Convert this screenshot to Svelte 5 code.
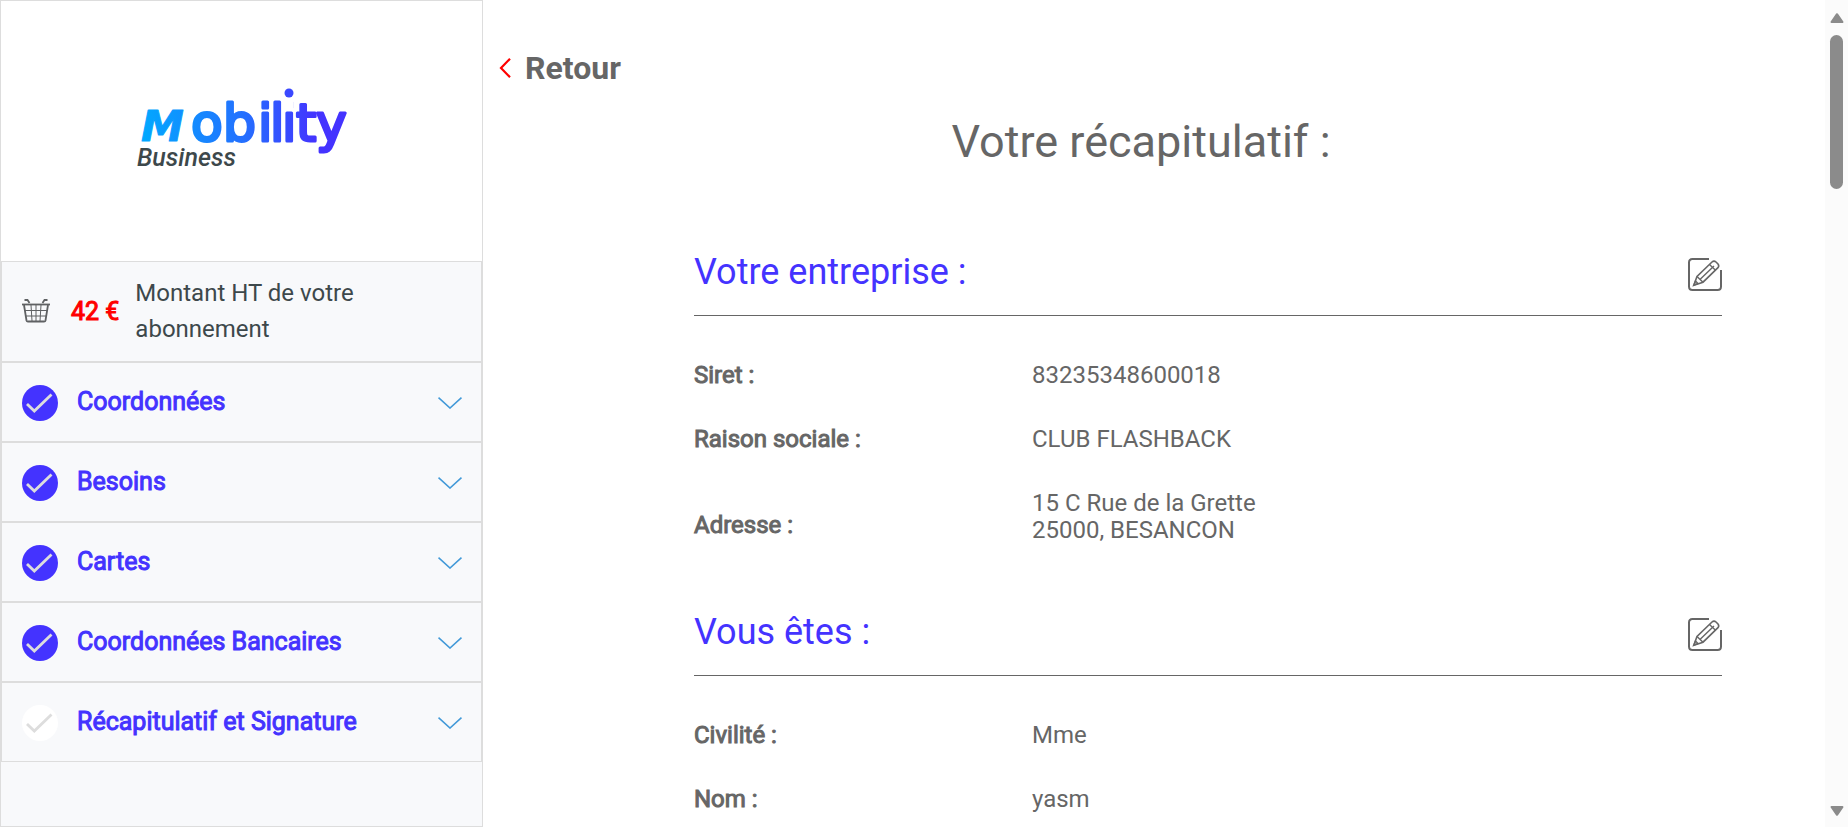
<script>
  const steps = [
    { label: 'Coordonnées', done: true },
    { label: 'Besoins', done: true },
    { label: 'Cartes', done: true },
    { label: 'Coordonnées Bancaires', done: true },
    { label: 'Récapitulatif et Signature', done: false }
  ];

  const sections = [
    {
      title: 'Votre entreprise :',
      rows: [
        { label: 'Siret :', lines: ['83235348600018'] },
        { label: 'Raison sociale :', lines: ['CLUB FLASHBACK'] },
        { label: 'Adresse :', lines: ['15 C Rue de la Grette', '25000, BESANCON'] }
      ]
    },
    {
      title: 'Vous êtes :',
      rows: [
        { label: 'Civilité :', lines: ['Mme'] },
        { label: 'Nom :', lines: ['yasm'] }
      ]
    }
  ];
</script>

<div class="page">
  <aside>
    <div class="brand">
      <svg width="216" height="90" viewBox="0 0 216 90" role="img" aria-label="Mobility Business">
        <defs>
          <linearGradient id="brand" gradientUnits="userSpaceOnUse" x1="4" y1="0" x2="214" y2="0">
            <stop offset="0" stop-color="#00aaff" />
            <stop offset="0.5" stop-color="#2470ff" />
            <stop offset="0.85" stop-color="#4433ff" />
          </linearGradient>
        </defs>
        <text class="word" y="55" fill="url(#brand)" stroke="url(#brand)" x="7 57 89 124 136 148 162 182"><tspan class="slant">M</tspan>obility</text>
        <rect x="150" y="11" width="9" height="13" fill="#fff" />
        <circle cx="155" cy="7" r="4.5" fill="#3a48ff" />
        <text class="sub" x="3" y="80">Business</text>
      </svg>
    </div>

    <div class="amount">
      <svg class="basket" width="28" height="24" viewBox="0 0 28 24" fill="none" stroke="#5f6163" aria-hidden="true">
        <path d="M0 5.5H28" stroke-width="1.8" />
        <path d="M2.5 1H5.5L7.5 4M25.5 1H22.5L20.5 4" stroke-width="1.8" />
        <path d="M2 6L4.500 21.500Q4.700 22.500 6 22.500H22Q23.300 22.500 23.500 21.500L26 6" stroke-width="1.8" />
        <path d="M3 11.500H25M4 17H24M9 6L10 22M14 6V22M19 6L18 22" />
      </svg>
      <strong class="price">42 €</strong>
      <span class="caption">Montant HT de votre abonnement</span>
    </div>

    <nav aria-label="Étapes">
      {#each steps as step}
        <button class="step" type="button">
          <svg width="36" height="36" viewBox="0 0 36 36" aria-hidden="true">
            <circle cx="18" cy="18" r="18" fill={step.done ? '#4433ff' : '#ffffff'} />
            <path d="M5 19L12.300 26L29.500 9.500" fill="none" stroke="#dddddd" stroke-width="2.8" />
          </svg>
          <span>{step.label}</span>
          <svg width="24" height="12" viewBox="0 0 24 12" aria-hidden="true">
            <path d="M0.500 0.700L12 11L23.500 0.700" fill="none" stroke="#4299d8" stroke-width="1.6" />
          </svg>
        </button>
      {/each}
    </nav>
  </aside>

  <main>
    <a class="back" href="#retour">
      <svg width="12" height="20" viewBox="0 0 12 20" aria-hidden="true">
        <path d="M11 0.800L2 10L11 19.200" fill="none" stroke="#ff0000" stroke-width="2.2" />
      </svg>
      Retour
    </a>

    <div class="content">
      <h1>Votre récapitulatif :</h1>
      {#each sections as section}
        <section>
          <header>
            <h2>{section.title}</h2>
            <button class="edit" type="button" aria-label="Modifier">
              <svg width="34" height="34" viewBox="0 0 34 34" fill="none" stroke="#666666" stroke-width="2">
                <path d="M21 1H4.500Q1 1 1 4.500V28.500Q1 32 4.500 32H29.500Q33 32 33 28.500V12" />
                <path d="M5.800 27.300L9 18.500L24 4Q26 2.200 28 4L30 6Q31.500 8 30 9.700L15 24.200Z" stroke-width="1.6" />
                <path d="M9 18.500L15 24.200M12.200 21.200L26 8M21.500 6.500L27.500 12.200M5.800 27.300L7.500 23L10 25.500Z" stroke-width="1.4" />
              </svg>
            </button>
          </header>
          <dl>
            {#each section.rows as row}
              <div class="row" class:tall={row.lines.length > 1}>
                <dt>{row.label}</dt>
                <dd>
                  {#each row.lines as line}<div>{line}</div>{/each}
                </dd>
              </div>
            {/each}
          </dl>
        </section>
      {/each}
    </div>
  </main>

  <div class="scrollbar" aria-hidden="true">
    <svg width="16" height="12" viewBox="0 0 16 12"><path d="M8 2.200L13.500 10H2.500Z" fill="#8b8b8b" stroke="#8b8b8b" stroke-width="2" stroke-linejoin="round" /></svg>
    <div class="track"><div class="thumb"></div></div>
    <svg width="16" height="12" viewBox="0 0 16 12"><path d="M8 9.800L13.500 2H2.500Z" fill="#8b8b8b" stroke="#8b8b8b" stroke-width="2" stroke-linejoin="round" /></svg>
  </div>
</div>

<style>
  :global(body) {
    margin: 0;
    background: #fff;
  }
  .page {
    display: flex;
    height: 100vh;
    overflow: hidden;
    font-family: Roboto, sans-serif;
    font-size: 24px;
    line-height: 27px;
    color: #666;
  }
  aside {
    box-sizing: border-box;
    flex: 0 0 483px;
    border: 1px solid #ddd;
    background: #f8f9fb;
    overflow: hidden;
  }
  .brand {
    display: flex;
    justify-content: center;
    padding: 85px 0;
    background: #fff;
  }
  .brand svg {
    overflow: visible;
  }
  .word {
    font-family: "DejaVu Sans", sans-serif;
    font-size: 52px;
    stroke-width: 3px;
    stroke-linejoin: round;
  }
  .slant {
    font-style: italic;
    font-size: 43px;
    font-weight: 700;
    stroke-width: 1px;
  }
  .sub {
    font-family: Roboto, sans-serif;
    font-size: 25px;
    font-style: italic;
    font-weight: 500;
    fill: #3d484b;
  }
  .amount {
    display: flex;
    align-items: center;
    padding: 13px 20px 14px;
    border: 1px solid #ddd;
    color: #3d484b;
  }
  .price {
    margin: 0 16px 0 21px;
    white-space: nowrap;
    color: #f00;
    font-size: 25px;
    font-weight: 400;
    -webkit-text-stroke: 1px currentColor;
  }
  .caption {
    max-width: 260px;
    line-height: 36px;
  }
  .step {
    box-sizing: border-box;
    display: flex;
    align-items: center;
    width: 100%;
    height: 80px;
    padding: 2px 19px 0 20px;
    border: 1px solid #ddd;
    background: none;
    color: #4433ff;
    font: inherit;
    font-size: 25px;
    text-align: left;
    cursor: pointer;
  }
  .step span {
    flex: 1;
    padding: 0 19px 3px;
    -webkit-text-stroke: 1px currentColor;
  }
  main {
    flex: 1;
    padding: 50px 0 0 16px;
    overflow: hidden;
  }
  .back {
    display: inline-flex;
    align-items: center;
    gap: 14px;
    font-size: 32px;
    font-weight: 700;
    line-height: 36px;
    color: #666;
    text-decoration: none;
  }
  .content {
    margin: 30px 103px 0 195px;
  }
  h1 {
    margin: 0 0 84px;
    padding-right: 134px;
    font-size: 45px;
    font-weight: 400;
    line-height: 52px;
    text-align: center;
  }
  section {
    margin-bottom: 68px;
  }
  header {
    display: flex;
    align-items: flex-end;
    justify-content: space-between;
    padding-bottom: 23px;
    border-bottom: 1px solid #666;
  }
  h2 {
    margin: 0;
    font-size: 36px;
    font-weight: 400;
    line-height: 40px;
    color: #4433ff;
  }
  .edit {
    display: block;
    padding: 0;
    border: 0;
    background: none;
    cursor: pointer;
  }
  .edit svg {
    display: block;
  }
  dl {
    display: grid;
    gap: 37px;
    margin: 46px 0 0;
  }
  .row {
    display: grid;
    grid-template-columns: 338px 1fr;
    align-items: end;
  }
  dt {
    -webkit-text-stroke: 1px currentColor;
  }
  .tall dt {
    padding-bottom: 5px;
  }
  dd {
    margin: 0;
  }
  .scrollbar {
    display: flex;
    flex: 0 0 23px;
    flex-direction: column;
    align-items: center;
    box-sizing: border-box;
    padding: 12px 0 10px;
    background: #fbfbfb;
  }
  .track {
    flex: 1;
    padding-top: 11px;
  }
  .thumb {
    width: 13px;
    height: 20%;
    border-radius: 7px;
    background: #8b8b8b;
  }
</style>
